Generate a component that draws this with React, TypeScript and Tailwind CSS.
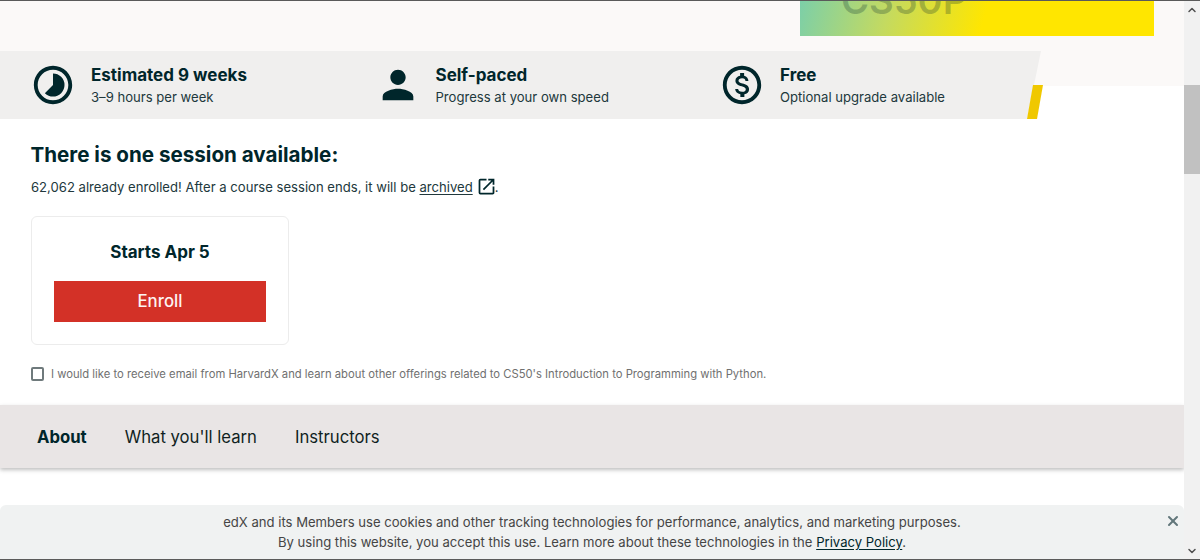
import { ChevronDown, ChevronUp, X } from "lucide-react";

const stats = [
  {
    title: "Estimated 9 weeks",
    sub: "3–9 hours per week",
    width: "w-[344.5px]",
    path: "M16.24 7.76A5.974 5.974 0 0 0 12 6v6l-4.24 4.24c2.34 2.34 6.14 2.34 8.49 0a5.99 5.99 0 0 0-.01-8.48zM12 2C6.48 2 2 6.48 2 12s4.48 10 10 10 10-4.48 10-10S17.52 2 12 2zm0 18c-4.42 0-8-3.58-8-8s3.58-8 8-8 8 3.58 8 8-3.58 8-8 8z",
  },
  {
    title: "Self-paced",
    sub: "Progress at your own speed",
    width: "w-[344.5px]",
    path: "M12 12c2.21 0 4-1.79 4-4s-1.79-4-4-4-4 1.79-4 4 1.79 4 4 4zm0 2c-2.67 0-8 1.34-8 4v2h16v-2c0-2.66-5.33-4-8-4z",
  },
  {
    title: "Free",
    sub: "Optional upgrade available",
    width: "w-[300px]",
    path: "M12 2C6.48 2 2 6.48 2 12s4.48 10 10 10 10-4.48 10-10S17.52 2 12 2zm0 18c-4.41 0-8-3.59-8-8s3.59-8 8-8 8 3.59 8 8-3.59 8-8 8z",
    inner: "M12.31 11.14c-1.77-.45-2.34-.94-2.34-1.67 0-.84.79-1.43 2.1-1.43 1.38 0 1.9.66 1.94 1.64h1.71c-.05-1.34-.87-2.57-2.49-2.97V5H10.9v1.69c-1.51.32-2.72 1.3-2.72 2.81 0 1.79 1.49 2.69 3.66 3.21 1.95.46 2.34 1.15 2.34 1.87 0 .53-.39 1.39-2.1 1.39-1.6 0-2.23-.72-2.32-1.64H8.04c.1 1.7 1.36 2.66 3 3.01V19h2.34v-1.67c1.52-.29 2.72-1.16 2.73-2.77-.01-2.2-1.9-2.96-3.8-3.42z",
  },
];

const App = () => {
  return (
    <div className="relative flex h-[560px] w-[1200px] flex-col overflow-hidden bg-white font-['Inter',sans-serif] text-[#00262b]">
      <div className="h-px bg-[#5a5a5a]" />
      <div className="flex min-h-0 flex-1">
        <main className="w-[1184px]">
          <div className="h-[85px] bg-[#fbf9f8] pl-[800px]">
            <div className="h-[35px] w-[354px] overflow-hidden bg-[linear-gradient(105deg,#7ccfa8_0%,#c4da60_25%,#ffe600_52%)]">
              <div className="ml-[41px] -mt-[24px] text-[38px] font-semibold leading-[46px] text-[#00262b]/25">CS50P</div>
            </div>
          </div>

          <div className="relative -mt-[35px] h-[68px] w-[1043px]">
            <div className="flex h-full items-center bg-[#f0efee] pl-[30px] [clip-path:polygon(0_0,1041px_0,1027px_68px,0_68px)]">
              {stats.map((s) => (
                <div key={s.title} className={`flex shrink-0 items-center ${s.width}`}>
                  <svg viewBox="0 0 24 24" className="h-[46px] w-[46px] fill-[#00262b]">
                    <path d={s.path} />
                    {s.inner && <path d={s.inner} transform="translate(1.2 1.2) scale(0.9)" />}
                  </svg>
                  <div className="ml-[15px]">
                    <div className="text-[17px] font-bold leading-[24px]">{s.title}</div>
                    <div className="text-[13.1px] leading-[20px] text-[#21383c]">{s.sub}</div>
                  </div>
                </div>
              ))}
            </div>
            <div className="absolute bottom-0 right-0 h-[34px] w-[16px] bg-[#f0c800] [clip-path:polygon(6px_0,16px_0,10px_34px,0_34px)]" />
          </div>

          <div className="pl-[31px]">
            <h2 className="mt-[22px] -ml-[0.5px] text-[20.6px] font-bold leading-[28px]">There is one session available:</h2>
            <p className="mt-[7px] flex items-center text-[13.1px] leading-[20px] text-[#21383c]">
              62,062 already enrolled! After a course session ends, it will be&nbsp;
              <span className="underline underline-offset-2">archived</span>
              <svg viewBox="0 0 24 24" className="ml-[3px] -mr-[2px] h-[21px] w-[21px] fill-[#00262b]">
                <path d="M19 19H5V5h7V3H5a2 2 0 0 0-2 2v14a2 2 0 0 0 2 2h14c1.1 0 2-.9 2-2v-7h-2v7zM14 3v2h3.59l-9.83 9.83 1.41 1.41L19 6.41V10h2V3h-7z" />
              </svg>
              .
            </p>
            <div className="mt-[19px] flex h-[129px] w-[258px] flex-col items-center rounded-[6px] border border-[#ececec] pt-[23px]">
              <div className="text-[17px] font-bold leading-[24px]">Starts Apr 5</div>
              <button className="mt-[17px] h-[41px] w-[212px] bg-[#d33127] text-[16.8px] font-medium text-[#fdf3f2]">Enroll</button>
            </div>
            <label className="mt-[21px] flex items-center text-[11.25px] leading-[16px] text-[#707070]">
              <span className="h-[14px] w-[13px] rounded-[2px] border-2 border-[#6f7a7c]" />
              <span className="ml-[7px]">I would like to receive email from HarvardX and learn about other offerings related to CS50's Introduction to Programming with Python.</span>
            </label>
          </div>

          <nav className="mt-[23px] flex h-[63px] items-center bg-[#e9e5e5] pl-[37px] pt-[2px] text-[16.7px] text-[#101f22] shadow-[0_2px_4px_rgba(0,0,0,0.25)]">
            <span className="font-bold text-[#00262b]">About</span>
            <span className="ml-[38px]">What you'll learn</span>
            <span className="ml-[38px]">Instructors</span>
          </nav>
        </main>

        <div className="flex w-4 flex-col bg-[#f1f1f1]">
          <div className="flex h-[17px] items-center justify-center">
            <ChevronUp size={12} strokeWidth={3} className="text-[#505050]" />
          </div>
          <div className="mt-[67px] h-[89px] bg-[#c1c1c1]" />
          <div className="mt-auto flex h-[17px] items-center justify-center">
            <ChevronDown size={12} strokeWidth={3} className="text-[#505050]" />
          </div>
        </div>
      </div>
      <div className="h-px bg-[#5a5a5a]" />

      <div className="absolute bottom-px left-0 flex h-[54px] w-[1184px] flex-col items-center justify-center rounded-t-[6px] bg-[#f0f2f2] text-[13.1px] leading-[20px] text-[#454545]">
        <div>edX and its Members use cookies and other tracking technologies for performance, analytics, and marketing purposes.</div>
        <div>
          By using this website, you accept this use. Learn more about these technologies in the <span className="text-[#00262b] underline underline-offset-2">Privacy Policy</span>.
        </div>
        <X size={16} strokeWidth={3} className="absolute right-[3px] top-[8px] text-[#62777b]" />
      </div>
    </div>
  );
};

export default App;
